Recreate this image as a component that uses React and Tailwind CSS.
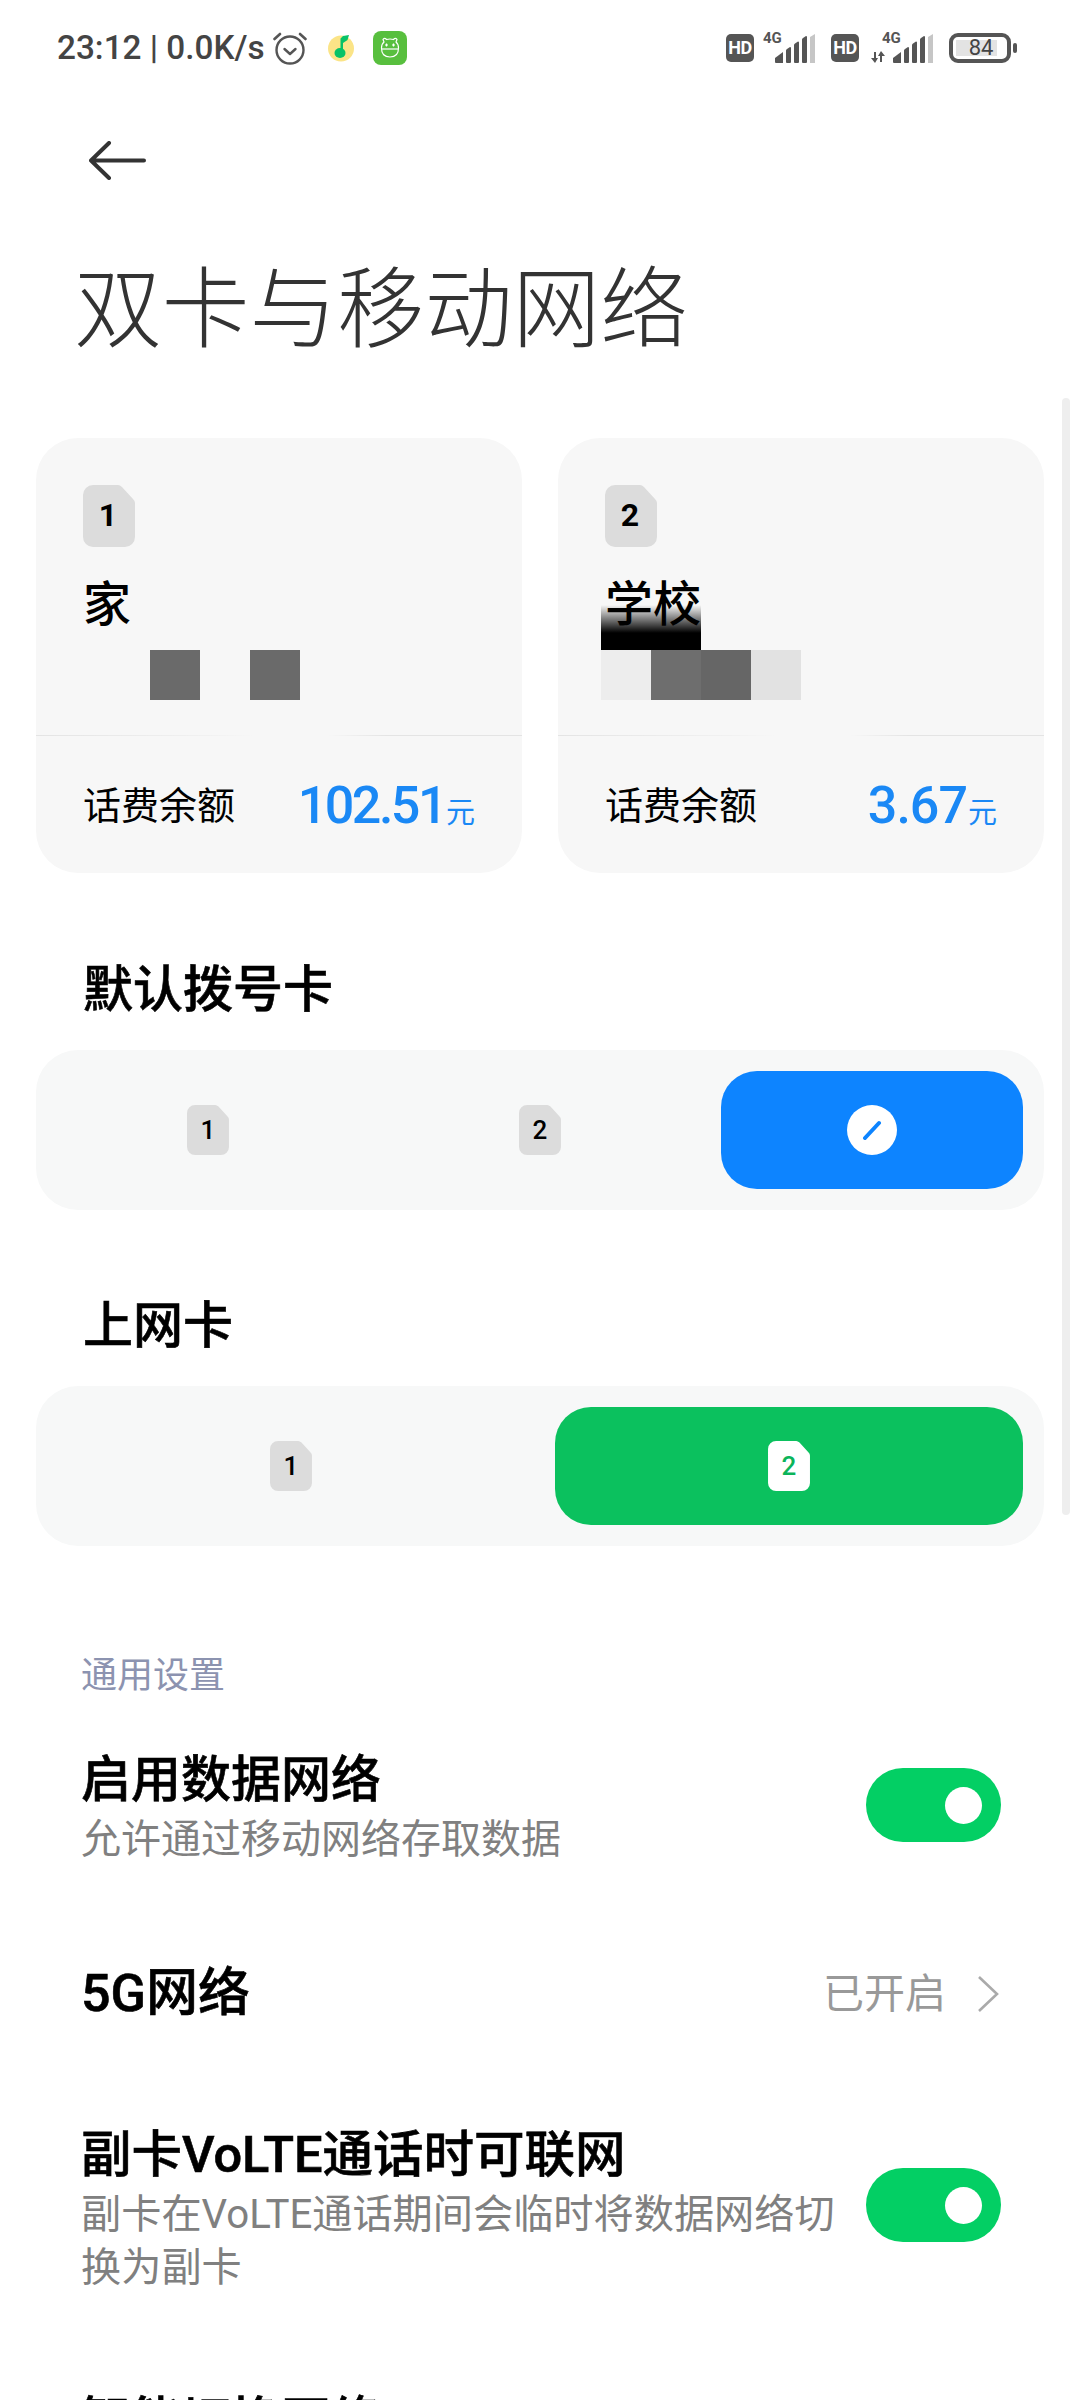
import React from "react";

function Sim({ n, big, color = "#dcdcdc", text = "text-black" }) {
  return (
    <div className={`relative flex items-center justify-center shrink-0 ${big ? "w-[52px] h-[62px]" : "w-[42px] h-[50px]"}`}>
      <svg viewBox="0 0 52 62" className="absolute inset-0 w-full h-full">
        <path d="M10 0H35Q37 0 39 2L50 14Q52 16 52 18V52A10 10 0 0 1 42 62H10A10 10 0 0 1 0 52V10A10 10 0 0 1 10 0Z" fill={color} />
      </svg>
      <span className={`relative ${text} ${big ? "font-bold text-[32px] leading-[38px] -translate-y-[1px] -translate-x-[1px]" : "font-medium text-[26px] leading-[30px]"}`}>{n}</span>
    </div>
  );
}

function Signal() {
  return (
    <svg viewBox="0 0 40 29" className="w-[40px] h-[29px] absolute right-0 bottom-0">
      <path d="M0 24L8 18V29H1Q0 29 0 28Z" fill="#555" />
      <path d="M11 16.5Q11 15.5 12 15L15 13Q16 13 16 14V28Q16 29 15 29H12Q11 29 11 28Z" fill="#555" />
      <path d="M19 11Q19 10 20 9.5L23 7.5Q24 7.5 24 8.5V28Q24 29 23 29H20Q19 29 19 28Z" fill="#555" />
      <path d="M27 5.5Q27 4.5 28 4L31 2Q32 2 32 3V28Q32 29 31 29H28Q27 29 27 28Z" fill="#555" />
      <path d="M35 3L40 0V29H35Z" fill="#c6c6c6" />
    </svg>
  );
}

function HD() {
  return (
    <div className="w-[28px] h-[28px] rounded-[5px] bg-[#555555] flex items-center justify-center text-white text-[18px] leading-none font-bold tracking-[-0.5px] shrink-0">HD</div>
  );
}

function Toggle({ lift = "mb-[8px]" }) {
  return (
    <div className={`w-[135px] h-[74px] rounded-[37px] bg-[#03cf64] flex items-center justify-end pr-[19px] shrink-0 ${lift}`}>
      <div className="w-[37px] h-[37px] rounded-full bg-white" />
    </div>
  );
}

function Card({ n, name, blocks, balance, tracking, second }) {
  return (
    <div className="bg-[#f7f7f7] rounded-[42px] h-[435px] flex flex-col overflow-hidden">
      <div className="pl-[47px] pt-[47px]">
        <Sim n={n} big />
      </div>
      <div className="pl-[47px] mt-[30px] h-[56px] relative z-10 text-[48px] leading-[56px] font-medium text-black">{name}</div>
      <div className={`mt-[17px] h-[50px] flex relative ${second ? "ml-[43px]" : "ml-[114px]"}`}>
        {second && <div className="absolute bottom-full left-0 w-[100px] h-[45px] bg-[linear-gradient(to_bottom,rgba(0,0,0,0),#000_62%)]" />}
        {blocks.map((c, i) => (
          <div key={i} className="w-[50px] h-[50px]" style={{ background: c }} />
        ))}
      </div>
      <div className="mt-[35px] h-[1px] bg-[linear-gradient(to_right,#e4e4e4,#f1f1f1_35%,#f7f7f7_45%,#f7f7f7_60%,#e4e4e4_72%)]" />
      <div className="flex-1 flex items-center justify-between pl-[47px] pr-[47px] text-black pt-[3px]">
        <span className="text-[38px] leading-[44px] font-normal">话费余额</span>
        <span className="flex items-baseline text-[#1a88f5]">
          <span className={`text-[52px] leading-[56px] font-medium ${tracking}`}>{balance}</span>
          <span className="text-[29px] leading-[30px] ml-[1px]">元</span>
        </span>
      </div>
    </div>
  );
}

function Segment({ children }) {
  return <div className="mx-[36px] mt-[30px] h-[160px] rounded-[42px] bg-[#f7f8f8] flex items-center px-[21px] gap-[30px]">{children}</div>;
}

const heading = "font-medium text-black [-webkit-text-stroke:0.6px_#000]";

export default function App() {
  return (
    <div className="relative h-[2400px] w-[1080px] overflow-hidden bg-white font-[Roboto,'Noto_Sans_CJK_SC',sans-serif]">
      {/* status bar */}
      <div className="h-[96px] flex items-center justify-between pl-[57px] pr-[63px]">
        <div className="flex items-center">
          <span className="text-[33.3px] leading-[40px] font-medium text-[#444444] whitespace-nowrap">23:12 | 0.0K/s</span>
          <svg viewBox="0 0 34 34" className="w-[34px] h-[34px] ml-[8px]" fill="none" stroke="#555" strokeLinecap="round">
            <circle cx="17" cy="19" r="13.5" strokeWidth="2.4" />
            <path d="M11.5 18L17 23L22.5 18" strokeWidth="2.4" strokeLinejoin="round" />
            <path d="M1.5 8L7 3M32.5 8L27 3" strokeWidth="2.6" />
          </svg>
          <svg viewBox="0 0 26 28" className="w-[26px] h-[28px] ml-[21px]">
            <circle cx="13" cy="14.5" r="13" fill="#fbe487" />
            <path d="M15 2L12.5 4.5V17H15V9L19.5 6L21 1Z" fill="#08c267" />
            <ellipse cx="12" cy="19" rx="5.5" ry="5" fill="#08c267" />
          </svg>
          <svg viewBox="0 0 34 34" className="w-[34px] h-[34px] ml-[19px]">
            <rect width="34" height="34" rx="8" fill="#58bf3e" />
            <g fill="none" stroke="#fff" strokeWidth="1.2">
              <path d="M11 11L10 8.5Q10.5 7 12.5 7.5L13.5 8.5Q17 7.5 20.5 8.5L21.5 7.5Q23.5 7 24 8.5L23 11Q25.5 13 25.5 17Q25.5 26 17 26Q8.5 26 8.5 17Q8.5 13 11 11Z" />
              <path d="M9 18H25" />
              <path d="M12 14H15M13.5 12.5V15.5M19 14H22M20.5 12.5V15.5" />
            </g>
          </svg>
        </div>
        <div className="flex items-center">
          <HD />
          <div className="relative w-[52px] h-[29px] ml-[9px] mb-[-1px]">
            <span className="absolute left-0 -top-[3px] text-[15px] leading-[15px] font-bold text-[#555555]">4G</span>
            <Signal />
          </div>
          <div className="ml-[16px]"><HD /></div>
          <div className="relative w-[62px] h-[29px] ml-[12px] mb-[-1px]">
            <span className="absolute left-[11px] -top-[3px] text-[15px] leading-[15px] font-bold text-[#555555]">4G</span>
            <svg viewBox="0 0 14 12" className="absolute left-0 bottom-0 w-[14px] h-[12px]" fill="#555">
              <path d="M4 12L0 7H3V1H5V7H7Z M10 0L14 5H11V11H9V5H7Z" />
            </svg>
            <Signal />
          </div>
          <div className="ml-[16px] w-[62px] h-[30px] rounded-[9px] border-[4px] border-[#555555] flex items-center pl-[3px] shrink-0">
            <div className="relative w-[41px] h-[16px] bg-[#e3e3e3] flex items-center justify-center">
              <span className="text-[22px] leading-[22px] text-[#444444] ml-[9px]">84</span>
            </div>
          </div>
          <div className="ml-[2px] w-[4px] h-[10px] rounded-[2px] bg-[#555555]" />
        </div>
      </div>

      {/* back arrow */}
      <div className="mt-[45px] pl-[89px] h-[39px]">
        <svg viewBox="0 0 57 39" className="w-[57px] h-[39px]" fill="none" stroke="#333" strokeWidth="4" strokeLinecap="round" strokeLinejoin="round">
          <path d="M55 19.5H2M20 2L2 19.5L20 37" />
        </svg>
      </div>

      {/* title */}
      <div className="mt-[80px] pl-[74px] h-[100px] text-[87.7px] leading-[100px] font-light text-[#333333] whitespace-nowrap">双卡与移动网络</div>

      {/* cards */}
      <div className="mt-[78px] mx-[36px] grid grid-cols-2 gap-[36px]">
        <Card n="1" name="家" blocks={["#6a6a6a", "transparent", "#6a6a6a"]} balance="102.51" tracking="tracking-[-2.5px]" />
        <Card n="2" name="学校" blocks={["#ededed", "#6e6e6e", "#666666", "#e2e2e2"]} balance="3.67" tracking="tracking-[-1px]" second />
      </div>

      {/* default dial */}
      <div className={`mt-[87px] pl-[83px] h-[60px] text-[50px] leading-[60px] ${heading}`}>默认拨号卡</div>
      <Segment>
        <div className="flex-1 flex items-center justify-center"><Sim n="1" /></div>
        <div className="flex-1 flex items-center justify-center"><Sim n="2" /></div>
        <div className="flex-1 h-[118px] rounded-[36px] bg-[#0d84ff] flex items-center justify-center">
          <div className="w-[50px] h-[50px] rounded-full bg-white flex items-center justify-center">
            <svg viewBox="0 0 20 20" className="w-[20px] h-[20px]" fill="none" stroke="#0d84ff" strokeWidth="4" strokeLinecap="round">
              <path d="M3 18L17 3" />
            </svg>
          </div>
        </div>
      </Segment>

      {/* data card */}
      <div className={`mt-[86px] pl-[83px] h-[60px] text-[50px] leading-[60px] ${heading}`}>上网卡</div>
      <Segment>
        <div className="flex-1 flex items-center justify-center"><Sim n="1" /></div>
        <div className="flex-1 h-[118px] rounded-[36px] bg-[#0bc15e] flex items-center justify-center">
          <Sim n="2" color="#ffffff" text="text-[#0bb45a]" />
        </div>
      </Segment>

      {/* settings */}
      <div className="mt-[110px] pl-[81px] h-[40px] text-[36px] leading-[40px] text-[#8c93b0]">通用设置</div>

      <div className="mt-[56px] pl-[81px] pr-[79px] flex items-center justify-between">
        <div>
          <div className={`text-[50px] leading-[56px] ${heading}`}>启用数据网络</div>
          <div className="mt-[5px] text-[40px] leading-[53px] text-[#808080]">允许通过移动网络存取数据</div>
        </div>
        <Toggle />
      </div>

      <div className="mt-[100px] pl-[81px] pr-[80px] h-[56px] flex items-center justify-between">
        <div className={`text-[52px] leading-[56px] ${heading}`}>5G网络</div>
        <div className="flex items-center">
          <span className="text-[41px] leading-[56px] text-[#999999]">已开启</span>
          <svg viewBox="0 0 22 38" className="w-[24px] h-[38px] ml-[30px]" fill="none" stroke="#aaaaaa" strokeWidth="2.6">
            <path d="M2 2L20 19L2 36" />
          </svg>
        </div>
      </div>

      <div className="mt-[105px] pl-[81px] pr-[79px] flex items-center justify-between">
        <div className="w-[765px]">
          <div className={`text-[50.5px] leading-[56px] whitespace-nowrap ${heading}`}>副卡VoLTE通话时可联网</div>
          <div className="mt-[5px] text-[40.2px] leading-[53px] text-[#808080]">副卡在VoLTE通话期间会临时将数据网络切换为副卡</div>
        </div>
        <Toggle lift="mb-[11px]" />
      </div>

      <div className={`mt-[99px] pl-[81px] text-[50px] leading-[56px] ${heading}`}>智能切换网络</div>

      {/* scroll indicator */}
      <div className="absolute left-[1062px] top-[398px] w-[8px] h-[1117px] rounded-full bg-[#eeeeee]" />
    </div>
  );
}
